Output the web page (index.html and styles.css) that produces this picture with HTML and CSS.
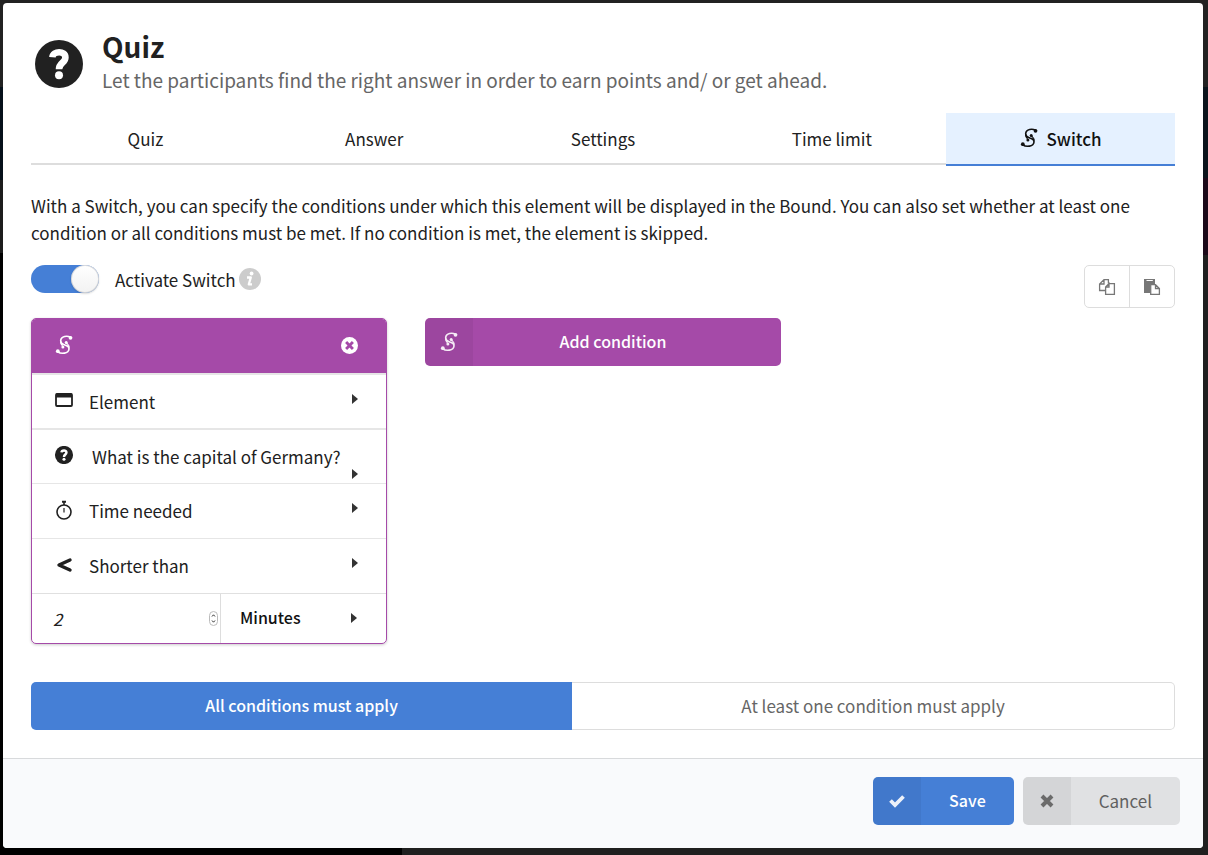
FILE: index.html
```html
<!DOCTYPE html>
<html lang="en">
<head>
    <meta charset="UTF-8" />
    <meta name="viewport" content="width=device-width, initial-scale=1.0" />
    <title>Quiz</title>
    <link rel="stylesheet" href="styles.css">
</head>
<body>
    <svg class="sprite" aria-hidden="true">
        <symbol id="icon-switch" viewBox="-1 0 18 20">
            <path d="M14.500 2.300C11.500 0.600 5 0.800 4.700 5.600C4.500 9.200 7.200 9.200 8.800 10C11 10.800 13.200 10.600 13 14C12.600 18.800 5 19.200 1.800 16.800" fill="none" stroke="currentColor" stroke-width="1.600" stroke-linecap="round" />
            <path d="M10.300 7.500C10.800 9 13.300 9.500 13.200 12.500M6.800 12C6.800 10.500 4.500 9.500 4.700 6.500" fill="none" stroke="currentColor" stroke-width="1.200" />
            <circle cx="14.500" cy="2.800" r="1.900" fill="currentColor" />
            <circle cx="1.800" cy="16.200" r="1.900" fill="currentColor" />
            <circle cx="10.200" cy="7.400" r="1.500" fill="currentColor" />
            <circle cx="6.900" cy="12.100" r="1.500" fill="currentColor" />
        </symbol>
        <symbol id="icon-question" viewBox="0 0 24 24">
            <circle cx="12" cy="12" r="12" fill="currentColor" />
            <path d="M8.700 8.600C9 5.400 15.200 5.200 15.200 8.700C15.200 11.400 12 11.400 12 14.600" fill="none" stroke="#fff" stroke-width="3.300" />
            <circle cx="12" cy="17.600" r="2" fill="#fff" />
        </symbol>
        <symbol id="icon-caret" viewBox="0 0 6 10">
            <path d="M0 0L6 5L0 10Z" fill="currentColor" />
        </symbol>
    </svg>

    <div class="modal">
        <header class="modal-header">
            <svg class="header-icon"><use href="#icon-question" /></svg>
            <div>
                <h1>Quiz</h1>
                <p class="subtitle">Let the participants find the right answer in order to earn points and/ or get ahead.</p>
            </div>
        </header>

        <div class="content">
            <nav class="tabs">
                <a class="tab" href="#quiz">Quiz</a>
                <a class="tab" href="#answer">Answer</a>
                <a class="tab" href="#settings">Settings</a>
                <a class="tab" href="#time">Time limit</a>
                <a class="tab active" href="#switch"><svg class="switch-icon"><use href="#icon-switch" /></svg>Switch</a>
            </nav>

            <p class="description">With a Switch, you can specify the conditions under which this element will be displayed in the Bound. You can also set whether at least one condition or all conditions must be met. If no condition is met, the element is skipped.</p>

            <div class="toolbar">
                <div class="toggle">
                    <input type="checkbox" id="activateSwitch" checked>
                    <label for="activateSwitch">Activate Switch</label>
                    <svg class="info-icon" viewBox="0 0 22 22">
                        <circle cx="11" cy="11" r="11" fill="#ccc" />
                        <circle cx="12.600" cy="5.500" r="1.900" fill="#fff" />
                        <path d="M8 9.500H11.800L9.800 16.300H13" fill="none" stroke="#fff" stroke-width="2.300" stroke-linejoin="round" />
                    </svg>
                </div>
                <div class="clipboard">
                    <button type="button" aria-label="Copy">
                        <svg viewBox="0 0 18 18" fill="none" stroke="currentColor" stroke-width="1.300">
                            <path d="M7 12.500H1.600V6L6 1.600H10.400V5.500M6 1.600V6H1.600" />
                            <path d="M11 5.600H16.400V16.400H7.600V9L11 5.600V9H7.600" />
                        </svg>
                    </button>
                    <button type="button" aria-label="Paste">
                        <svg viewBox="0 0 18 18">
                            <path d="M1 1H12V6H7V15H1Z" fill="currentColor" />
                            <path d="M3.500 2.500H9.800" stroke="#fff" stroke-width="1" />
                            <path d="M7.700 6.700H12.500L16.400 10.500V16.400H7.700ZM12.500 6.700V10.500H16.400" fill="#fff" stroke="currentColor" stroke-width="1.300" />
                        </svg>
                    </button>
                </div>
            </div>

            <div class="conditions">
                <div class="card">
                    <div class="card-header">
                        <svg class="switch-icon"><use href="#icon-switch" /></svg>
                        <button type="button" class="remove" aria-label="Remove condition">
                            <svg viewBox="0 0 16 16">
                                <circle cx="8" cy="8" r="8" fill="#fff" />
                                <path d="M4.800 4.800L11.200 11.200M11.200 4.800L4.800 11.200" stroke="#a54aa8" stroke-width="2.700" />
                            </svg>
                        </button>
                    </div>
                    <button type="button" class="row thick">
                        <svg class="row-icon" viewBox="0 0 20 20">
                            <rect x="2" y="4" width="16" height="12" rx="1" fill="none" stroke="currentColor" stroke-width="1.800" />
                            <path d="M2 3.500H18V7.500H2Z" fill="currentColor" />
                        </svg>
                        <span>Element</span>
                        <svg class="caret"><use href="#icon-caret" /></svg>
                    </button>
                    <button type="button" class="row thick question">
                        <svg class="row-icon" viewBox="-1 -1 22 22"><use href="#icon-question" width="20" height="20" /></svg>
                        <span>What is the capital of Germany?</span>
                        <svg class="caret"><use href="#icon-caret" /></svg>
                    </button>
                    <button type="button" class="row">
                        <svg class="row-icon" viewBox="0 0 20 20" fill="none" stroke="currentColor">
                            <circle cx="10" cy="12" r="7" stroke-width="1.600" />
                            <path d="M10 8V12.500" stroke-width="1.200" />
                            <path d="M10 2V5" stroke-width="1.600" />
                            <path d="M8 1.800H12" stroke-width="2" />
                        </svg>
                        <span>Time needed</span>
                        <svg class="caret"><use href="#icon-caret" /></svg>
                    </button>
                    <button type="button" class="row">
                        <svg class="row-icon" viewBox="0 0 20 20">
                            <path d="M16 5L5 10L16 15" fill="none" stroke="currentColor" stroke-width="3.400" stroke-linecap="round" stroke-linejoin="round" />
                        </svg>
                        <span>Shorter than</span>
                        <svg class="caret"><use href="#icon-caret" /></svg>
                    </button>
                    <div class="value-row">
                        <div class="amount">
                            <input type="number" value="2" aria-label="Amount">
                            <svg class="spinner" viewBox="0 0 9 15" fill="none">
                                <rect x="0.500" y="0.500" width="8" height="14" rx="4" stroke="#bbb" />
                                <path d="M3 5.500L4.500 3.800L6 5.500M3 9.500L4.500 11.200L6 9.500" stroke="#333" />
                            </svg>
                        </div>
                        <div class="unit">
                            <select aria-label="Unit">
                                <option>Minutes</option>
                            </select>
                            <svg class="caret"><use href="#icon-caret" /></svg>
                        </div>
                    </div>
                </div>
                <button type="button" class="button purple">
                    <span class="button-icon"><svg class="switch-icon"><use href="#icon-switch" /></svg></span>
                    <span class="button-label">Add condition</span>
                </button>
            </div>

            <div class="mode">
                <button type="button" class="selected">All conditions must apply</button>
                <button type="button">At least one condition must apply</button>
            </div>
        </div>

        <footer class="actions">
            <button type="button" class="button blue">
                <span class="button-icon">
                    <svg viewBox="0 0 18 18"><path d="M2.500 8.500L7 13L15.500 4.500" fill="none" stroke="currentColor" stroke-width="3.800" /></svg>
                </span>
                <span class="button-label">Save</span>
            </button>
            <button type="button" class="button grey">
                <span class="button-icon">
                    <svg viewBox="0 0 18 18"><path d="M4 4L14 14M14 4L4 14" fill="none" stroke="currentColor" stroke-width="4" /></svg>
                </span>
                <span class="button-label">Cancel</span>
            </button>
        </footer>
    </div>
</body>
</html>
```
FILE: styles.css
```css
* { box-sizing: border-box; }
body {
    margin: 0;
    padding: 3px 5px 7px 3px;
    min-height: 100vh;
    /* dimmed page behind the modal */
    background:
        linear-gradient(#222 87px, #06101a 87px, #06101a 180px, #1c1c1c 180px, #1c1c1c 253px, #000 253px) left / 3px 100% no-repeat,
        linear-gradient(#222 87px, #0b141c 87px, #0b141c 178px, #1c0a1a 178px, #1c0a1a 255px, #1f1f1f 255px) right / 5px 100% no-repeat,
        linear-gradient(#222, #222) top / 100% 87px no-repeat,
        linear-gradient(to right, #000 402px, #1f1f1f 402px);
    color: #212121;
    font-family: "Noto Sans CJK SC", "Noto Sans", sans-serif;
    font-size: 17px;
    line-height: 27px;
}
h1, p { margin: 0; }
button, input, select { font: inherit; color: inherit; }
button { margin: 0; padding: 0; border: 0; background: none; cursor: pointer; }
svg { display: block; flex: none; }
.sprite { display: none; }

.modal { background: #fff; border-radius: 4px; overflow: hidden; }
.modal-header { display: flex; align-items: center; gap: 19px; padding: 27px 32px 16px; }
.header-icon { width: 48px; height: 48px; }
h1 { font-size: 28px; line-height: 33px; font-weight: 700; }
.subtitle { font-size: 19px; line-height: 34px; color: #666; }

.content { padding: 0 28px 28px; }
.tabs { display: flex; height: 52px; border-bottom: 2px solid #ddd; }
.tab {
    flex: 1;
    display: flex;
    align-items: center;
    justify-content: center;
    height: 53px;
    padding-bottom: 1px;
    color: #212121;
    text-decoration: none;
    border-bottom: 2px solid transparent;
}
.tab.active { gap: 9px; background: #e5f1ff; border-color: #457fd6; color: #111; font-weight: 500; }
.switch-icon { width: 18px; height: 20px; }

.description { margin: 27px 0 19px; }
.toolbar { display: flex; justify-content: space-between; align-items: flex-start; margin-bottom: 10px; }
.toggle { display: flex; align-items: center; gap: 3px; height: 28px; }
.toggle input {
    appearance: none;
    position: relative;
    width: 68px;
    height: 28px;
    margin: 0 13px 0 0;
    border-radius: 14px;
    background: #ddd;
}
.toggle input:checked { background: #457fd6; }
.toggle input::after {
    content: "";
    position: absolute;
    top: 0;
    right: 0;
    width: 28px;
    height: 28px;
    border-radius: 50%;
    background: linear-gradient(#fff, #f2f2f2);
    box-shadow: 0 1px 2px rgba(0, 0, 0, 0.15), 0 0 0 1px rgba(34, 36, 38, 0.15) inset;
}
.info-icon { width: 22px; height: 22px; }
.clipboard { display: flex; border: 1px solid #ddd; border-radius: 5px; }
.clipboard button { display: flex; align-items: center; justify-content: center; width: 44px; height: 41px; color: #777; }
.clipboard button + button { width: 45px; border-left: 1px solid #ddd; }
.clipboard svg { width: 18px; height: 18px; }

.conditions { display: grid; grid-template-columns: repeat(3, 1fr); gap: 38px; align-items: start; }
.card {
    border: 1px solid #a54aa8;
    border-radius: 5px;
    overflow: hidden;
    box-shadow: 0 1px 3px rgba(0, 0, 0, 0.2);
}
.card-header {
    display: flex;
    align-items: center;
    justify-content: space-between;
    height: 54px;
    padding: 0 28px 2px 23px;
    background: #a54aa8;
    color: #fff;
}
.remove svg { width: 17px; height: 17px; }
.row {
    position: relative;
    display: flex;
    align-items: center;
    gap: 15px;
    width: 100%;
    height: 55px;
    padding: 0 28px 1px 22px;
    border-top: 1px solid #e6e6e6;
    text-align: left;
}
.row.thick { border-top-width: 2px; }
.row-icon { width: 20px; height: 20px; margin-bottom: 2px; }
.caret { width: 6px; height: 10px; margin-left: auto; color: #333; }
.row .caret { margin-bottom: 5px; }
.question { gap: 18px; }
.question .caret { position: absolute; right: 28px; bottom: 4px; margin: 0; }
.value-row { display: flex; height: 50px; border-top: 1px solid #e0e0e0; }
.amount { display: flex; align-items: center; width: 189px; padding: 0 2px 1px 21px; border-right: 1px solid #ddd; }
.amount input { flex: 1; min-width: 0; padding: 0; border: 0; font-style: italic; appearance: textfield; }
.spinner { width: 9px; height: 15px; }
.unit { flex: 1; display: flex; align-items: center; padding: 0 29px 2px 19px; color: #111; }
.unit select { flex: 1; appearance: none; padding: 0; border: 0; background: none; font-size: 16px; font-weight: 500; }

.button { display: flex; height: 48px; border-radius: 5px; overflow: hidden; font-size: 16px; font-weight: 500; }
.button-icon { display: flex; align-items: center; justify-content: center; width: 48px; height: 48px; background: rgba(0, 0, 0, 0.05); }
.button-icon svg { width: 18px; height: 18px; opacity: 0.9; }
.button-label { flex: 1; padding: 10px 28px; }
.purple { background: #a54aa8; color: #fff; }
.purple .switch-icon { height: 20px; }
.purple .button-label { padding-right: 56px; }
.blue { background: #457fd6; color: #fff; }
.grey { background: #e0e1e3; color: #606060; font-size: 17px; font-weight: 400; }

.mode { display: flex; margin-top: 38px; }
.mode button { flex: 1 1 auto; height: 48px; padding-bottom: 2px; border: 1px solid #ddd; border-left: 0; border-radius: 0 5px 5px 0; color: #666; }
.mode .selected { padding: 0 5px 1px; border: 0; border-radius: 5px 0 0 5px; background: #457fd6; color: #fff; font-size: 16px; font-weight: 500; }

.actions {
    display: flex;
    justify-content: flex-end;
    gap: 9px;
    padding: 18px 23px 23px;
    border-top: 1px solid #d8dadc;
    background: #f9fafc;
}
```
